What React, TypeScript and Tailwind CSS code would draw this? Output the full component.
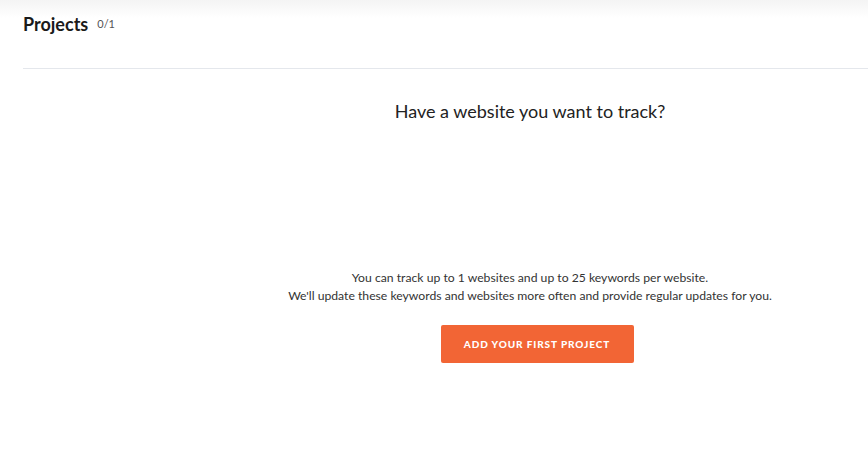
export default function App() {
  return (
    <div
      className="w-full h-[454px] bg-[linear-gradient(to_bottom,#f4f4f4_0px,#ffffff_18px)] text-[#1f1f1f]"
      style={{ fontFamily: "Lato, 'Open Sans', sans-serif" }}
    >
      {/* Header */}
      <div className="ml-[23px] h-[69px] border-b border-[#e4e7ec] pt-[12px] flex items-start">
        <h1 className="text-[18px] leading-[24px] font-bold text-[#1a1a1a]">Projects</h1>
        <span className="ml-[9px] mt-[4px] text-[11px] leading-[16px] text-[#555]">0/1</span>
      </div>

      {/* Empty state */}
      <div className="pl-[192px] flex flex-col items-center">
        <h2 className="mt-[29px] text-[18px] leading-[26px] text-[#222]">Have a website you want to track?</h2>
        <div className="mt-[145px] text-center text-[12.2px] leading-[18px] text-[#333]">
          <p>You can track up to 1 websites and up to 25 keywords per website.</p>
          <p>We'll update these keywords and websites more often and provide regular updates for you.</p>
        </div>
        <button className="mt-[20px] ml-[14px] w-[193px] h-[38px] rounded-[2px] bg-[#f26535] text-white text-[10px] font-black tracking-[0.9px] uppercase">
          Add your first project
        </button>
      </div>
    </div>
  )
}
